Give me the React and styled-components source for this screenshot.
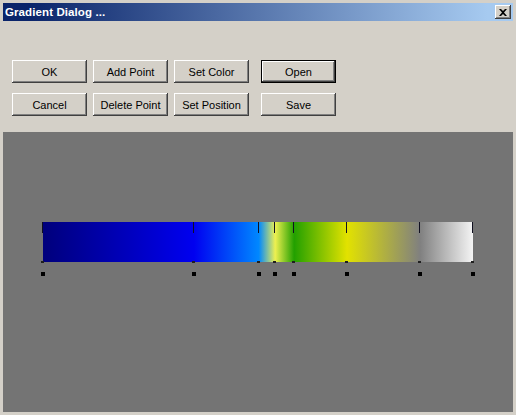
import styled, { createGlobalStyle } from "styled-components";

const GlobalStyle = createGlobalStyle`
  html, body {
    margin: 0;
    padding: 0;
    background: #d4d0c8;
  }
  * { box-sizing: border-box; }
`;

const stops = [
  { pos: 0, color: "#00007c" },
  { pos: 35.1, color: "#0000f0" },
  { pos: 50.2, color: "#0088ff" },
  { pos: 54.0, color: "#eef050" },
  { pos: 58.4, color: "#22a000" },
  { pos: 70.7, color: "#e2e200" },
  { pos: 87.7, color: "#808080" },
  { pos: 100, color: "#f4f4f4" },
];

function Button({ label, primary }) {
  return <Btn $primary={primary}>{label}</Btn>;
}

function App() {
  const gradient = `linear-gradient(to right, ${stops
    .map((s) => `${s.color} ${s.pos}%`)
    .join(", ")})`;

  return (
    <>
      <GlobalStyle />
      <Window>
        <TitleBar>
          <Title>Gradient Dialog ...</Title>
          <CloseBtn>
            <svg width="8" height="7" viewBox="0 0 8 7">
              <path
                d="M0 0h2l2 2 2-2h2L5 3.5 8 7H6L4 5 2 7H0l3-3.5z"
                fill="#000"
              />
            </svg>
          </CloseBtn>
        </TitleBar>
        <Toolbar>
          <ButtonGrid>
            <Button label="OK" />
            <Button label="Add Point" />
            <Button label="Set Color" />
            <Button label="Open" primary />
            <Button label="Cancel" />
            <Button label="Delete Point" />
            <Button label="Set Position" />
            <Button label="Save" />
          </ButtonGrid>
        </Toolbar>
        <Canvas>
          <BarWrap>
            <Bar style={{ background: gradient }}>
              {stops.map((s) => (
                <Tick key={s.pos} style={{ left: `${s.pos}%` }} />
              ))}
              {stops.map((s) => (
                <Notch key={"n" + s.pos} style={{ left: `${s.pos}%` }} />
              ))}
            </Bar>
            <MarkerRow>
              {stops.map((s) => (
                <Marker key={s.pos} style={{ left: `${s.pos}%` }} />
              ))}
            </MarkerRow>
          </BarWrap>
        </Canvas>
      </Window>
    </>
  );
}

const Window = styled.div`
  width: 516px;
  height: 415px;
  display: flex;
  flex-direction: column;
  background: #d4d0c8;
  border: 3px solid #d4d0c8;
  box-shadow: inset 1px 1px #ffffff, inset -1px -1px #404040;
`;

const TitleBar = styled.div`
  height: 18px;
  flex: none;
  display: flex;
  align-items: center;
  justify-content: space-between;
  padding: 0 2px 0 2px;
  background: linear-gradient(to right, #0a246a 5%, #a6caf0 95%);
`;

const Title = styled.span`
  color: #fff;
  font-family: "Liberation Sans", Arial, sans-serif;
  font-weight: bold;
  font-size: 11.5px;
  letter-spacing: 0.1px;
`;

const CloseBtn = styled.div`
  width: 16px;
  height: 14px;
  display: flex;
  align-items: center;
  justify-content: center;
  background: #d4d0c8;
  box-shadow: inset -1px -1px #404040, inset 1px 1px #ffffff,
    inset -2px -2px #808080;
`;

const Toolbar = styled.div`
  height: 111px;
  flex: none;
  background: #d4d0c8;
  padding: 39px 0 0 9px;
`;

const ButtonGrid = styled.div`
  display: grid;
  grid-template-columns: 75px 75px 75px 81px;
  grid-auto-rows: 23px;
  column-gap: 6px;
  row-gap: 10px;
  & > :nth-child(4n) {
    justify-self: end;
    width: 75px;
  }
`;

const Btn = styled.div`
  display: flex;
  align-items: center;
  justify-content: center;
  background: #d4d0c8;
  font-family: "Liberation Sans", Arial, sans-serif;
  font-size: 11px;
  color: #000;
  border: ${(p) => (p.$primary ? "1px solid #000" : "none")};
  box-shadow: inset -1px -1px #404040, inset 1px 1px #ffffff,
    inset -2px -2px #808080;
`;

const Canvas = styled.div`
  flex: 1;
  background: #747474;
  padding: 90px 0 0 40px;
`;

const BarWrap = styled.div`
  width: 430px;
  position: relative;
`;

const Bar = styled.div`
  height: 40px;
  position: relative;
`;

const Tick = styled.div`
  position: absolute;
  top: 0;
  width: 1px;
  height: 11px;
  background: #101020;
  margin-left: -1px;
`;

const Notch = styled.div`
  position: absolute;
  bottom: -1px;
  width: 3px;
  height: 2px;
  margin-left: -2px;
  background: #202020;
`;

const MarkerRow = styled.div`
  position: relative;
  height: 14px;
`;

const Marker = styled.div`
  position: absolute;
  top: 10px;
  width: 4px;
  height: 4px;
  margin-left: -2px;
  background: #000;
`;

export default App;
